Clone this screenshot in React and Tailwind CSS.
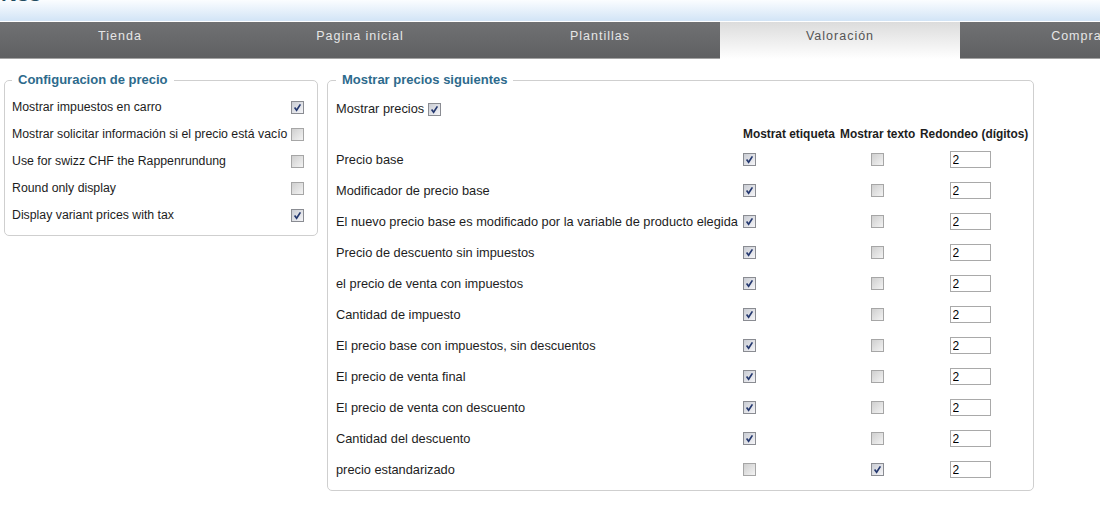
const tabs = ["Tienda", "Pagina inicial", "Plantillas", "Valoración", "Compras"];

const generalRows = [
  { label: "Mostrar impuestos en carro", checked: true },
  { label: "Mostrar solicitar información si el precio está vacío", checked: false },
  { label: "Use for swizz CHF the Rappenrundung", checked: false },
  { label: "Round only display", checked: false },
  { label: "Display variant prices with tax", checked: true },
];

const priceRows = [
  ["Precio base", true, false],
  ["Modificador de precio base", true, false],
  ["El nuevo precio base es modificado por la variable de producto elegida", true, false],
  ["Precio de descuento sin impuestos", true, false],
  ["el precio de venta con impuestos", true, false],
  ["Cantidad de impuesto", true, false],
  ["El precio base con impuestos, sin descuentos", true, false],
  ["El precio de venta final", true, false],
  ["El precio de venta con descuento", true, false],
  ["Cantidad del descuento", true, false],
  ["precio estandarizado", false, true],
];

function Box({ checked }) {
  return (
    <span
      className={`inline-flex w-[13px] h-[13px] shrink-0 items-center justify-center border bg-linear-to-br ${
        checked
          ? "border-[#8a8c92] from-[#c9ccd3] to-[#f5f5f8]"
          : "border-[#a6a6a6] from-[#cfcfcf] to-[#f3f3f3]"
      }`}
    >
      {checked && (
        <svg width="9" height="9" viewBox="0 0 9 9">
          <path d="M1.6 4.6 L3.6 7.2 L7.4 1.4" stroke="#24386f" strokeWidth="1.7" fill="none" />
        </svg>
      )}
    </span>
  );
}

function App() {
  return (
    <div className="w-[1100px] h-[515px] overflow-hidden bg-white text-[#1d1d1d] font-['Liberation_Sans',Arial,sans-serif]">
      {/* top band */}
      <div className="h-[22px] overflow-hidden border-b border-white bg-linear-to-b from-[#fbfdff] to-[#d2e4f6]">
        <div className="-mt-[17px] pl-[1px] text-[22px] font-bold leading-[22px] text-[#1f4b60]">Nss</div>
      </div>

      {/* tabs */}
      <div className="flex h-[37px] overflow-hidden">
        {tabs.map((t) => {
          const active = t === "Valoración";
          return (
            <div
              key={t}
              className={`w-[240px] shrink-0 pt-[6px] text-center text-[12.5px] leading-[16px] tracking-[1px] ${
                active
                  ? "bg-linear-to-b from-[#dcdcdc] to-white text-[#555555]"
                  : "bg-linear-to-b from-[#707173] to-[#5f6062] border-b border-[#a3a3a3] text-[#e6e6e6]"
              }`}
            >
              {t}
            </div>
          );
        })}
      </div>

      <div className="flex items-start gap-[9px] pl-[4px] mt-[13px]">
        {/* left fieldset */}
        <fieldset className="w-[314px] rounded-[5px] border border-[#cfcfcf] pl-[7px] pr-[13px] pt-[6px] pb-[6px]">
          <legend className="px-[6px] text-[13px] font-bold leading-[16px] text-[#2d6a8c]">
            Configuracion de precio
          </legend>
          {generalRows.map((r) => (
            <div key={r.label} className="flex h-[27px] items-center justify-between text-[12.3px]">
              <span className="whitespace-nowrap">{r.label}</span>
              <Box checked={r.checked} />
            </div>
          ))}
        </fieldset>

        {/* right fieldset */}
        <fieldset className="w-[707px] rounded-[5px] border border-[#cfcfcf] pl-[8px] pr-[7px] pt-[9px] pb-[5px]">
          <legend className="px-[6px] text-[13px] font-bold leading-[16px] text-[#2d6a8c]">
            Mostrar precios siguientes
          </legend>
          <div className="flex h-[24px] items-center gap-[4px] text-[12.8px]">
            <span>Mostrar precios</span>
            <Box checked />
          </div>
          <div className="grid h-[23px] grid-cols-[407px_97px_80px_106px] items-end pb-[3px] text-[11.9px] font-bold leading-[14px] whitespace-nowrap">
            <span />
            <span>Mostrat etiqueta</span>
            <span>Mostrar texto</span>
            <span>Redondeo (dígitos)</span>
          </div>
          {priceRows.map(([label, showLabel, showText]) => (
            <div key={label} className="grid h-[31px] grid-cols-[407px_97px_80px_106px] items-center text-[12.8px]">
              <span className="whitespace-nowrap">{label}</span>
              <span className="flex">
                <Box checked={showLabel} />
              </span>
              <span className="flex justify-center pr-[6px]">
                <Box checked={showText} />
              </span>
              <span className="flex justify-center pr-[6px]">
                <input
                  type="text"
                  defaultValue="2"
                  className="h-[17px] w-[41px] border border-[#a9a9a9] pl-[2px] text-[12px] leading-[15px] text-black outline-none"
                />
              </span>
            </div>
          ))}
        </fieldset>
      </div>
    </div>
  );
}

export default App;
